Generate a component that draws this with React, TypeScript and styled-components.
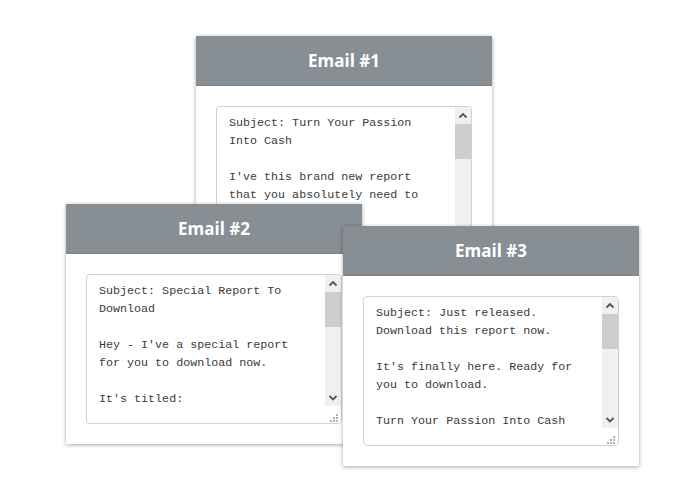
import * as React from 'react';
import styled, { createGlobalStyle } from 'styled-components';

const GlobalStyle = createGlobalStyle`
  html, body {
    margin: 0;
    padding: 0;
    background: #ffffff;
  }
`;

const Canvas = styled.div`
  position: relative;
  width: 700px;
  height: 500px;
  overflow: hidden;
`;

const Card = styled.div<{ $x: number; $y: number; $z: number }>`
  position: absolute;
  left: ${p => p.$x}px;
  top: ${p => p.$y}px;
  z-index: ${p => p.$z};
  width: 296px;
  background: #ffffff;
  box-shadow: 0 1px 4px rgba(0, 0, 0, 0.35);
  display: flex;
  flex-direction: column;
`;

const Header = styled.div`
  height: 50px;
  background: #878e94;
  display: flex;
  align-items: center;
  justify-content: center;
  border-bottom: 1px solid #7d8388;
  box-sizing: border-box;
`;

const Title = styled.h2`
  margin: 0;
  color: #ffffff;
  font-family: "Open Sans", "Noto Sans", sans-serif;
  font-weight: 700;
  font-size: 17px;
`;

const Body = styled.div`
  padding: 20px;
`;

const Field = styled.div`
  display: flex;
  box-sizing: border-box;
  width: 256px;
  height: 150px;
  border: 1px solid #cfd1d4;
  border-radius: 4px;
  overflow: hidden;
  background: #ffffff;
`;

const Message = styled.textarea`
  flex: 1;
  min-width: 0;
  margin: 0;
  padding: 7px 12px 6px;
  border: none;
  font-family: "Liberation Mono", "Courier New", monospace;
  font-size: 11.7px;
  line-height: 18px;
  color: #3a3a3a;
  background: transparent;
  resize: none;
  overflow: hidden;
  outline: none;
`;

const ScrollBar = styled.div`
  width: 16px;
  display: flex;
  flex-direction: column;
`;

const ArrowButton = styled.div`
  height: 17px;
  background: #f0f0f0;
  display: flex;
  align-items: center;
  justify-content: center;
`;

const Track = styled.div`
  flex: 1;
  background: #f0f0f0;
`;

const Thumb = styled.div`
  height: 35px;
  background: #cdcdcd;
`;

const Corner = styled.div`
  height: 17px;
  background: #ffffff;
  display: flex;
  align-items: flex-end;
  justify-content: flex-end;
`;

const Chevron = ({ down }: { down?: boolean }) => (
  <svg width="16" height="17" viewBox="0 0 16 17">
    <path
      d={down ? 'M4.5 7 L8 10.5 L11.5 7' : 'M4.5 10.5 L8 7 L11.5 10.5'}
      fill="none"
      stroke="#5a4f57"
      strokeWidth="1.8"
    />
  </svg>
);

const Grip = () => (
  <svg width="16" height="17" viewBox="0 0 16 17">
    <g fill="#b0b0b0">
      <rect x="11" y="8" width="2" height="2" />
      <rect x="8" y="11" width="2" height="2" />
      <rect x="11" y="11" width="2" height="2" />
      <rect x="5" y="14" width="2" height="2" />
      <rect x="8" y="14" width="2" height="2" />
      <rect x="11" y="14" width="2" height="2" />
    </g>
  </svg>
);

const emails = [
  {
    title: 'Email #1',
    x: 196,
    y: 36,
    text:
      "Subject: Turn Your Passion Into Cash\n\nI've this brand new report that you absolutely need to read today.\n\nIt's called Turn Your Passion Into Cash and it shows you step by step how to make money from the things you love doing.\n\nGrab your copy here:\n[LINK]\n\nTalk soon,\n[NAME]",
  },
  {
    title: 'Email #2',
    x: 66,
    y: 204,
    text:
      "Subject: Special Report To Download\n\nHey - I've a special report for you to download now.\n\nIt's titled:\n\nTurn Your Passion Into Cash\n\nDownload it here:\n[LINK]\n\nCheers,\n[NAME]",
  },
  {
    title: 'Email #3',
    x: 343,
    y: 226,
    text:
      "Subject: Just released. Download this report now.\n\nIt's finally here. Ready for you to download.\n\nTurn Your Passion Into Cash\n\nGet it now:\n[LINK]\n\nSpeak soon,\n[NAME]",
  },
];

export default function App() {
  return (
    <>
      <GlobalStyle />
      <Canvas>
        {emails.map((e, i) => (
          <Card key={e.title} $x={e.x} $y={e.y} $z={i + 1}>
            <Header>
              <Title>{e.title}</Title>
            </Header>
            <Body>
              <Field>
                <Message defaultValue={e.text} spellCheck={false} />
                <ScrollBar>
                  <ArrowButton>
                    <Chevron />
                  </ArrowButton>
                  <Track>
                    <Thumb />
                  </Track>
                  <ArrowButton>
                    <Chevron down />
                  </ArrowButton>
                  <Corner>
                    <Grip />
                  </Corner>
                </ScrollBar>
              </Field>
            </Body>
          </Card>
        ))}
      </Canvas>
    </>
  );
}
